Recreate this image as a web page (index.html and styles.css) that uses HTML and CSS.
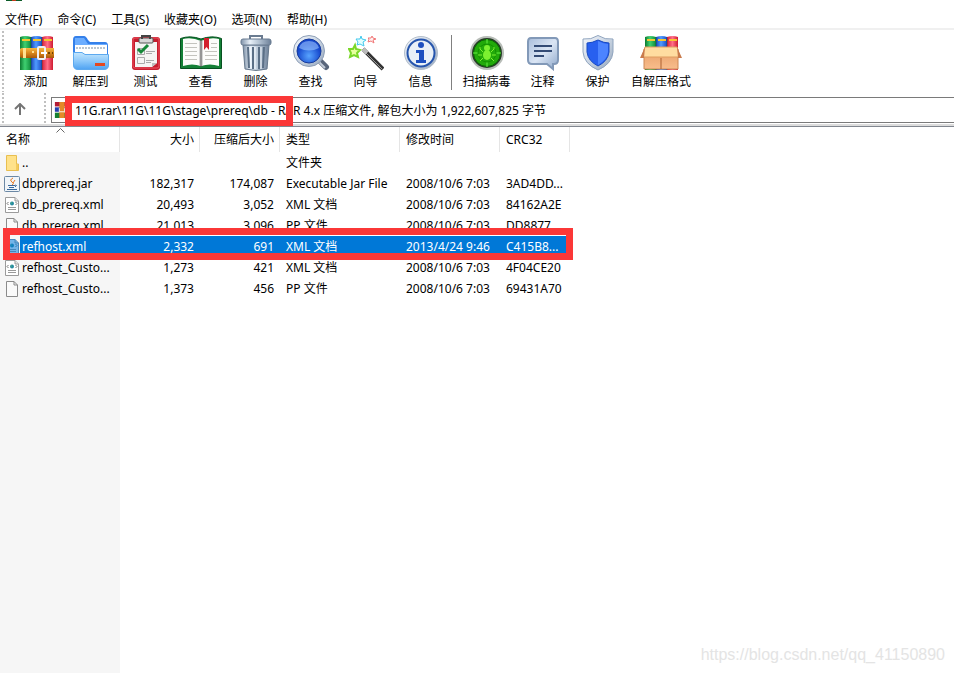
FILE: index.html
```html
<!DOCTYPE html>
<html lang="zh-CN">
<head>
<meta charset="utf-8">
<title>11G.rar</title>
<link rel="stylesheet" href="styles.css">
</head>
<body>
<svg class="defs" aria-hidden="true">
  <defs>
    <linearGradient id="gGreen"><stop offset="0" stop-color="#0c7a30"/><stop offset=".45" stop-color="#3fd070"/><stop offset="1" stop-color="#0f8a3a"/></linearGradient>
    <linearGradient id="gBlue"><stop offset="0" stop-color="#1c46b8"/><stop offset=".45" stop-color="#4f9bff"/><stop offset="1" stop-color="#1b4cc4"/></linearGradient>
    <linearGradient id="gRed"><stop offset="0" stop-color="#d8203a"/><stop offset=".5" stop-color="#ff6f88"/><stop offset="1" stop-color="#cf1a30"/></linearGradient>
    <linearGradient id="gBelt" x2="0" y2="1"><stop offset="0" stop-color="#f6b840"/><stop offset=".5" stop-color="#d8861c"/><stop offset="1" stop-color="#a85808"/></linearGradient>
    <linearGradient id="gFolder" x2="0" y2="1"><stop offset="0" stop-color="#c4e6fd"/><stop offset=".5" stop-color="#8cc8fa"/><stop offset="1" stop-color="#4ea2f2"/></linearGradient>
    <linearGradient id="gSteel"><stop offset="0" stop-color="#7f92a8"/><stop offset=".3" stop-color="#e8f0f8"/><stop offset=".6" stop-color="#b4c3d3"/><stop offset="1" stop-color="#6d8098"/></linearGradient>
    <linearGradient id="gRim" x2="1" y2="1"><stop offset="0" stop-color="#f4f7fb"/><stop offset=".5" stop-color="#c9d4e2"/><stop offset="1" stop-color="#94a5bb"/></linearGradient>
    <radialGradient id="gLens" cy=".7"><stop offset="0" stop-color="#58a4ff"/><stop offset="1" stop-color="#1446cc"/></radialGradient>
    <linearGradient id="gBubble" x2="1" y2="1"><stop offset="0" stop-color="#a8bddb"/><stop offset=".5" stop-color="#dae5f4"/><stop offset="1" stop-color="#8da7ca"/></linearGradient>
    <linearGradient id="gBox" x2="0" y2="1"><stop offset="0" stop-color="#e8a068"/><stop offset="1" stop-color="#f8bd8c"/></linearGradient>
    <g id="books">
      <path fill="url(#gGreen)" d="M0 1Q5-1 11 1V34H0z"/><path fill="url(#gBlue)" d="M11 1Q17-1 22 1V34H11z"/><path fill="url(#gRed)" d="M22 1Q28-1 33 1V34H22z"/>
      <path stroke="#f7c630" stroke-width="2" d="M2 4H10M13 4H21M24 4H32"/>
      <path stroke="#0a4020" stroke-opacity=".4" d="M11 1V34M22 1V34"/>
    </g>
    <g id="xmlfile">
      <path fill="#fff" stroke="#9b9b9b" d="M.5.5H10L13.500 4V15.500H.5z"/><path fill="#e8e8e8" stroke="#999" d="M10 .5V4H13.500"/>
      <circle cx="7" cy="6.500" r="2" fill="#258aa0"/><path fill="#53b575" d="M6 5.500h1v1H6z"/><path fill="none" stroke="#777" d="M3.500 5L2 6.500 3.500 8M10.500 5L12 6.500 10.500 8"/>
      <path stroke="#999" d="M3 10.500H11M3 12.500H11"/>
    </g>
  </defs>
</svg>

<header class="titlebar"><span class="app-mark"></span></header>

<nav class="menu">
  <button>文件(F)</button><button>命令(C)</button><button>工具(S)</button><button>收藏夹(O)</button><button>选项(N)</button><button>帮助(H)</button>
</nav>

<div class="toolbar">
  <button class="tool"><svg width="36" height="36"><use href="#books" x="2" y="1"/><path fill="url(#gBelt)" d="M2 14Q4 12 7 14V13H36V23H7V22Q4 24 2 22z"/><path fill="#ffe090" d="M5 13H8V23H5zM14 16h2v2h-2z"/><rect x="20" y="12" width="7" height="12" rx="1" fill="none" stroke="#f0f0f0" stroke-width="2"/><path stroke="#fff" stroke-width="2" d="M23 18h6"/><path fill="#704000" d="M30 17h2v2h-2zM34 17h1v2h-1z"/></svg>添加</button>
  <button class="tool"><svg width="36" height="36"><path fill="#3480ea" d="M0 5Q0 1 3 1H11Q13 1 15 5L17 7H32Q35 7 35 11V24H0z"/><path fill="#6badff" d="M2 3H11L15 9H34V15H2z"/><path fill="#fff" d="M2 10H34V22H2z"/><path stroke="#bac5d0" stroke-width="2" stroke-dasharray="2 1" d="M3 13H33"/><path fill="url(#gFolder)" stroke="#5da9ef" d="M.5 17.500H9L12 19.500H35.500V30Q35.500 34.500 31 34.500H5Q.500 34.500 .5 30z"/><rect x="22" y="28" width="10" height="3" fill="#e44820"/></svg>解压到</button>
  <button class="tool"><svg width="36" height="36"><rect x="4" y="2" width="28" height="33" rx="3" fill="#c51e2e"/><rect x="5" y="3" width="26" height="30" rx="2" fill="none" stroke="#ef5360"/><path fill="#f5f5f3" d="M7 7H29V28L24 32H7z"/><path fill="#bdbdbd" d="M24 32V28H29z"/><rect x="11" y="3" width="14" height="5" rx="1" fill="#d8d8d8" stroke="#555"/><path fill="none" stroke="#444" stroke-width="2" d="M14 4V1H22V4"/><path fill="none" stroke="#aaa" d="M9.500 13.500h7v6h-7zM9.500 22.500h7v6h-7zM18 16.500H27M18 18.500H24M18 25.500H26M18 27.500H23"/><path fill="none" stroke="#168838" stroke-width="3" d="M10 14L13 17 20 10"/></svg>测试</button>
  <button class="tool"><svg width="42" height="36"><path fill="#148036" stroke="#075020" d="M.500 3.500Q10 0 21 4Q32 0 41.500 3.500V33.500H.500z"/><path fill="#fcfcfa" d="M3 4Q12 2 21 6V31Q12 28 3 31zM39 4Q30 2 21 6V31Q30 28 39 31z"/><path fill="#bbb" d="M19 5L21 6 23 5V31H19z" opacity=".6"/><path stroke="#555" d="M21 5V32"/><path stroke="#c4c4be" d="M5 8.500H17M5 12.500H17M5 16.500H17M5 20.500H17M5 24.500H17M25 16.500H37M25 20.500H37M25 24.500H37M31 8.500H37M31 12.500H37"/><path fill="#d3202e" d="M24 3H29V15L26.500 12 24 15z"/></svg>查看</button>
  <button class="tool"><svg width="36" height="36"><path fill="none" stroke="#6a7b90" stroke-width="2" d="M12 4V1H24V4"/><path fill="url(#gSteel)" stroke="#66788c" d="M5 10H31L29 34Q18 37 7 34z"/><path stroke="#5b6f86" stroke-width="2" d="M10 12L11 33M15 12V34M21 12V34M26 12L25 33"/><path stroke="#f5faff" d="M12 12L13 33M17 12V34M23 12V34"/><rect x="3" y="4" width="30" height="6" rx="2" fill="url(#gSteel)" stroke="#687b91"/></svg>删除</button>
  <button class="tool"><svg width="38" height="36"><path stroke="#58657a" stroke-width="6" stroke-linecap="round" d="M27 25L34 32"/><path stroke="#c1cad6" stroke-width="2" d="M26 26L33 33"/><circle cx="17" cy="16" r="15.500" fill="url(#gRim)" stroke="#8e9fb7"/><circle cx="17" cy="16" r="12" fill="url(#gLens)" stroke="#173b9b"/><path fill="#9cc5ff" opacity=".6" d="M7 13Q9 6 17 6T27 13Q17 18 7 13z"/></svg>查找</button>
  <button class="tool"><svg width="36" height="36"><path stroke="#333" stroke-width="4" d="M15 14L35 34"/><path stroke="#999" d="M15 15L34 34"/><path stroke="#bbb" stroke-width="4" d="M15 14L19 18"/><path fill="#e6ff9e" stroke="#7ad728" stroke-width="2" d="M7 10L8 14 12 15 9 18 10 22 6 20 2 22 3 18 1 14 5 14z"/><path fill="#e1ffff" stroke="#44c9ed" d="M13 1L14 4 18 5 15 7 16 11 12 9 9 10 10 7 8 4 12 4z"/><path fill="#fff0ef" stroke="#f17a7a" d="M24 1L25 3 28 4 25 5 26 8 23 6 20 7 21 4 20 3 23 3z"/></svg>向导</button>
  <button class="tool"><svg width="36" height="36"><circle cx="18" cy="18" r="16.500" fill="url(#gRim)" stroke="#b4bfcc"/><circle cx="18" cy="18" r="13.500" fill="#e9f0f7" stroke="#2655ad" stroke-width="2"/><circle cx="18" cy="10" r="3" fill="#1d4fbf"/><path fill="#1d4fbf" d="M13 15H21V25H23V28H13V25H16V18H13z"/></svg>信息</button>
  <span class="divider"></span>
  <button class="tool wide-scan"><svg width="36" height="36"><circle cx="18" cy="18" r="16" fill="#2a3a2a" stroke="#b8bdb8" stroke-width="2"/><circle cx="18" cy="18" r="13.500" fill="#22aa0a" stroke="#0b6505"/><path stroke="#65ef43" d="M18 4V9M18 27V32M4 18H9M27 18H32"/><circle cx="18" cy="18" r="9" fill="none" stroke="#139100"/><ellipse cx="18" cy="20" rx="4" ry="5" fill="#7cf030"/><circle cx="18" cy="13" r="3" fill="#7cf030"/><path fill="none" stroke="#7cf030" d="M14 17L11 14V12M22 17L25 14V12M13 20H9M23 20H27M14 23L11 26M22 23L25 26"/></svg>扫描病毒</button>
  <button class="tool"><svg width="36" height="36"><path fill="url(#gBubble)" stroke="#8299b8" stroke-width="2" d="M6 3H30Q33 3 33 7V25Q33 29 29 29H28V34L22 29H7Q3 29 3 25V7Q3 3 6 3z"/><path stroke="#334b75" stroke-width="2" d="M9 11H27M9 16H27M9 21H19"/></svg>注释</button>
  <button class="tool"><svg width="36" height="36"><path fill="url(#gRim)" stroke="#8fa4be" d="M18 .500Q25 5 33 4V17Q32 29 18 35Q4 29 3 17V4Q11 5 18 .500z"/><path fill="#2860ef" stroke="#174ac2" d="M18 5Q24 8 29 8V17Q28 26 18 31Q8 26 7 17V8Q12 8 18 5z"/><path fill="#4c84ff" d="M18 6Q24 9 28 9V17Q27 25 18 30z"/></svg>保护</button>
  <button class="tool wide-sfx"><svg width="42" height="36"><use href="#books" x="5" y="1"/><path fill="url(#gBox)" stroke="#cc8854" d="M4 14H38V34H4z"/><path stroke="#ad6030" d="M21 23V34"/><path fill="#ffdca0" stroke="#df9c60" d="M5 12H37L40 22H2z"/><path fill="#c97b4c" d="M5 12L0 23H4zM37 12L42 23H38z"/></svg>自解压格式</button>
</div>

<div class="address">
  <button class="up" aria-label="上一级"><svg width="12" height="12"><path fill="none" stroke="#747474" stroke-width="2" d="M6 12V2M1 6L6 1 11 6"/></svg></button>
  <label class="path">
    <svg width="16" height="16" viewBox="0 0 16 18"><path fill="#b41c35" d="M0 0H16V5H0z"/><path fill="#253fae" d="M0 6H16V11H0z"/><path fill="#168033" d="M0 12H16V18H0z"/><path fill="#e48a29" d="M5 0H11V18H5z"/><path fill="none" stroke="#fff" d="M5 7V11H11V7"/></svg>
    <input aria-label="路径" value="11G.rar\11G\11G\stage\prereq\db - RAR 4.x 压缩文件, 解包大小为 1,922,607,825 字节">
  </label>
  <span class="mark mark-path"></span>
</div>

<main class="list">
  <table>
    <colgroup><col class="c-name"><col class="c-size"><col class="c-size"><col class="c-type"><col class="c-date"><col class="c-crc"></colgroup>
    <thead>
      <tr><th>名称<svg class="sort" width="9" height="5"><path fill="none" stroke="#666" d="M.500 4.500L4.500 .500 8.500 4.500"/></svg></th><th class="num">大小</th><th class="num">压缩后大小</th><th>类型</th><th>修改时间</th><th>CRC32</th></tr>
    </thead>
    <tbody>
      <tr><td><span class="name"><svg width="16" height="18"><path fill="#ffe28a" stroke="#e8bf50" d="M2.500 1.500H12.500V10H14.500V16.500H2.500z"/><path fill="#f4cb5c" d="M12 10h2v6h-2z"/></svg>..</span></td><td></td><td></td><td>文件夹</td><td></td><td></td></tr>
      <tr><td><span class="name"><svg width="16" height="18"><rect x=".500" y="1.500" width="15" height="15" rx="1" fill="#f0f5f9" stroke="#6b88a5"/><path fill="none" stroke="#e87820" d="M9 3Q5 5 8 7T8 10M11 5L9 8"/><path fill="none" stroke="#39699d" d="M4 10.500H11M5 12.500H10M3 14.500H13M11 10Q14 10 11 12"/></svg>dbprereq.jar</span></td><td class="num">182,317</td><td class="num">174,087</td><td>Executable Jar File</td><td>2008/10/6 7:03</td><td>3AD4DD...</td></tr>
      <tr><td><span class="name"><svg width="16" height="18"><use href="#xmlfile" x="1" y="1"/></svg>db_prereq.xml</span></td><td class="num">20,493</td><td class="num">3,052</td><td>XML 文档</td><td>2008/10/6 7:03</td><td>84162A2E</td></tr>
      <tr><td><span class="name"><svg width="16" height="18"><path fill="#fafafa" stroke="#8b8b8b" d="M2.500 1.500H10L13.500 5V16.500H2.500zM10 1.500V5H13.500"/></svg>db_prereq.xml...</span></td><td class="num">21,013</td><td class="num">3,096</td><td>PP 文件</td><td>2008/10/6 7:03</td><td>DD8877...</td></tr>
      <tr class="selected"><td><span class="name"><svg width="16" height="18"><use href="#xmlfile" x="1" y="1"/><path fill="#0078d7" opacity=".55" d="M1 1H11L15 5V17H1z"/></svg>refhost.xml</span></td><td class="num">2,332</td><td class="num">691</td><td>XML 文档</td><td>2013/4/24 9:46</td><td>C415B8...</td></tr>
      <tr><td><span class="name"><svg width="16" height="18"><use href="#xmlfile" x="1" y="1"/></svg>refhost_Custo...</span></td><td class="num">1,273</td><td class="num">421</td><td>XML 文档</td><td>2008/10/6 7:03</td><td>4F04CE20</td></tr>
      <tr><td><span class="name"><svg width="16" height="18"><path fill="#fafafa" stroke="#8b8b8b" d="M2.500 1.500H10L13.500 5V16.500H2.500zM10 1.500V5H13.500"/></svg>refhost_Custo...</span></td><td class="num">1,373</td><td class="num">456</td><td>PP 文件</td><td>2008/10/6 7:03</td><td>69431A70</td></tr>
    </tbody>
  </table>
  <div class="name-fill"></div>
  <span class="mark mark-row"></span>
</main>
<div class="watermark">https://blog.csdn.net/qq_41150890</div>
</body>
</html>
```
FILE: styles.css
```css
* { box-sizing: border-box; }

body {
  margin: 0;
  min-height: 100vh;
  display: flex;
  flex-direction: column;
  background: #fff;
  color: #000;
  font: 12px/16px "Noto Sans", "Noto Sans CJK SC", sans-serif;
  position: relative;
}

button, input { font: inherit; color: inherit; background: none; border: 0; padding: 0; }
svg { display: block; flex: none; }
.defs { position: absolute; width: 0; height: 0; }

.titlebar { height: 10px; padding-left: 6px; }
.app-mark { display: block; width: 16px; height: 1px; background: linear-gradient(90deg, #0c5b28 35%, #c23a1c 35% 65%, #0c5b28 65%); }

.menu { display: flex; gap: 15px; padding: 2px 5px 0; border-bottom: 2px solid #f0f0f0; }

.toolbar {
  display: flex;
  height: 62px;
  padding: 5px 8px 3px;
  background: radial-gradient(circle, #c0c0c0 1px, transparent 1px) 1px 0 / 4px 4px repeat-y;
}
.tool { width: 55px; display: flex; flex-direction: column; align-items: center; gap: 3px; white-space: nowrap; }
.wide-scan { width: 57px; }
.wide-sfx { width: 72px; }
.divider { width: 1px; margin: 0 6px 0 3px; background: #808080; height: 55px; }

.address {
  display: flex;
  position: relative;
  padding: 5px 0 1px;
  border-bottom: 2px solid #dcdcdc;
  background: radial-gradient(circle, #c0c0c0 1px, transparent 1px) 1px 0 / 4px 4px repeat-y,
    radial-gradient(circle, #c0c0c0 1px, transparent 1px) 43px 0 / 4px 4px repeat-y;
}
.up { width: 51px; padding: 6px 0 0 14px; display: flex; }
.path { flex: 1; display: flex; align-items: center; height: 26px; padding-left: 2px; border: 1px solid #7a7a7a; border-right: 0; }
.path input { flex: 1; min-width: 0; height: 24px; padding-left: 5px; }

.mark { position: absolute; border: 7px solid #fb3737; pointer-events: none; }
.mark-path { left: 65px; top: 4px; width: 228px; height: 31px; }

.list { flex: 1; display: flex; flex-direction: column; position: relative; border-top: 1px solid #828790; }
table { width: 570px; table-layout: fixed; border-collapse: collapse; }
.c-name, .c-type { width: 120px; }
.c-size { width: 80px; }
.c-date { width: 100px; }
.c-crc { width: 70px; }
th, td { padding: 0 6px; text-align: left; font-weight: normal; white-space: nowrap; }
.num { text-align: right; }
th {
  position: relative;
  height: 25px;
  background: linear-gradient(#e5e5e5, #e5e5e5) right / 1px 100% no-repeat;
}
.sort { position: absolute; left: 56px; top: 1px; }
td { height: 21px; }
td:first-child { padding: 0 0 0 4px; background: #f6f6f6; }
.name { display: flex; align-items: center; gap: 2px; }
.selected td { background: #0078d7; color: #fff; }
.selected td:first-child { background: linear-gradient(90deg, #f6f6f6 20px, #0078d7 20px); }
.name-fill { flex: 1; width: 120px; background: #f6f6f6; }
.mark-row { left: 3px; top: 101px; width: 570px; height: 32px; }

.watermark {
  position: absolute;
  right: 9px;
  bottom: 8px;
  color: #e4e4e4;
  font: 16px/20px "Liberation Sans", sans-serif;
}
```
